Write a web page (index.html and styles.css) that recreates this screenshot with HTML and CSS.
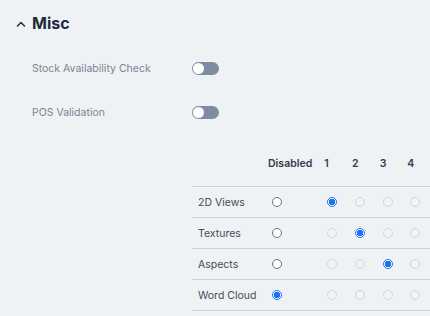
FILE: index.html
```html
<!DOCTYPE html>
<html lang="en">
<head>
    <meta charset="UTF-8">
    <meta name="viewport" content="width=device-width, initial-scale=1.0">
    <title>Misc Settings</title>
    <link rel="stylesheet" href="styles.css">
</head>
<body>
    <section class="section">
        <header class="section-head">
            <svg class="chevron" width="10" height="6" viewBox="0 0 10 6">
                <path d="M1.5 5 L5 1.5 L8.5 5" fill="none" stroke="#2b3445" stroke-width="1.6" stroke-linecap="round" stroke-linejoin="round"/>
            </svg>
            <h2>Misc</h2>
        </header>

        <div class="setting">
            <span class="setting-label">Stock Availability Check</span>
            <span class="toggle"><span class="knob"></span></span>
        </div>
        <div class="setting">
            <span class="setting-label">POS Validation</span>
            <span class="toggle"><span class="knob"></span></span>
        </div>

        <div class="matrix">
            <div class="matrix-head">
                <span class="cell name"></span>
                <span class="cell wide">Disabled</span>
                <span class="cell">1</span>
                <span class="cell">2</span>
                <span class="cell">3</span>
                <span class="cell">4</span>
            </div>
            <div class="matrix-row">
                <span class="cell name">2D Views</span>
                <span class="cell wide"><span class="radio"></span></span>
                <span class="cell"><span class="radio on"></span></span>
                <span class="cell"><span class="radio off"></span></span>
                <span class="cell"><span class="radio off"></span></span>
                <span class="cell"><span class="radio off"></span></span>
            </div>
            <div class="matrix-row">
                <span class="cell name">Textures</span>
                <span class="cell wide"><span class="radio"></span></span>
                <span class="cell"><span class="radio off"></span></span>
                <span class="cell"><span class="radio on"></span></span>
                <span class="cell"><span class="radio off"></span></span>
                <span class="cell"><span class="radio off"></span></span>
            </div>
            <div class="matrix-row">
                <span class="cell name">Aspects</span>
                <span class="cell wide"><span class="radio"></span></span>
                <span class="cell"><span class="radio off"></span></span>
                <span class="cell"><span class="radio off"></span></span>
                <span class="cell"><span class="radio on"></span></span>
                <span class="cell"><span class="radio off"></span></span>
            </div>
            <div class="matrix-row">
                <span class="cell name">Word Cloud</span>
                <span class="cell wide"><span class="radio on"></span></span>
                <span class="cell"><span class="radio off"></span></span>
                <span class="cell"><span class="radio off"></span></span>
                <span class="cell"><span class="radio off"></span></span>
                <span class="cell"><span class="radio off"></span></span>
            </div>
        </div>
    </section>
</body>
</html>
```

FILE: styles.css
```css
/* Misc settings panel */
body {
    font-family: Inter, "Noto Sans", sans-serif;
    margin: 0;
    padding: 0;
    background-color: #eff2f5;
    color: #333;
    overflow: hidden;
}

.section {
    padding: 12px 0 0 16px;
}

.section-head {
    display: flex;
    align-items: center;
    height: 22px;
}

.chevron {
    margin-right: 6px;
    margin-top: 1px;
}

.section-head h2 {
    margin: 0;
    font-size: 16px;
    font-weight: 700;
    color: #1e2a3d;
}

.setting {
    display: flex;
    align-items: center;
    height: 44px;
    padding-left: 16px;
}

.section-head + .setting {
    margin-top: 12px;
}

.setting-label {
    width: 160px;
    font-size: 10.5px;
    color: #7a8494;
}

.toggle {
    position: relative;
    width: 27px;
    height: 13px;
    border-radius: 7px;
    background: #7d8ba3;
}

.toggle .knob {
    position: absolute;
    top: 1px;
    left: 1px;
    width: 11px;
    height: 11px;
    border-radius: 50%;
    background: white;
}

.matrix {
    margin: 6px 0 0 176px;
}

.matrix-head,
.matrix-row {
    display: flex;
    align-items: center;
}

.matrix-head {
    height: 46px;
    font-size: 10.5px;
    font-weight: 600;
    color: #343b4a;
}

.matrix-row {
    height: 30px;
    border-top: 1px solid #c9d2df;
    font-size: 10.5px;
    color: #444b59;
}

.matrix-row:last-child {
    border-bottom: 1px solid #c9d2df;
}

.cell {
    display: flex;
    align-items: center;
    width: 28px;
    padding-left: 5px;
    box-sizing: border-box;
}

.matrix-row .cell {
    padding-left: 8px;
}

.cell.name {
    width: 73px;
}

.matrix-row .cell.name {
    padding-left: 6px;
}

.cell.wide {
    width: 56px;
    padding-left: 4px;
}

.matrix-row .cell.wide {
    padding-left: 8px;
}

.radio {
    width: 10px;
    height: 10px;
    border-radius: 50%;
    border: 1px solid #6c7280;
    background: white;
    box-sizing: border-box;
}

.radio.off {
    border-color: #cfd5dd;
    background: #f1f3f6;
}

.radio.on {
    border: 1.2px solid #1a73f0;
    background: radial-gradient(circle, #1a73f0 0 3px, white 3.4px);
}
```
